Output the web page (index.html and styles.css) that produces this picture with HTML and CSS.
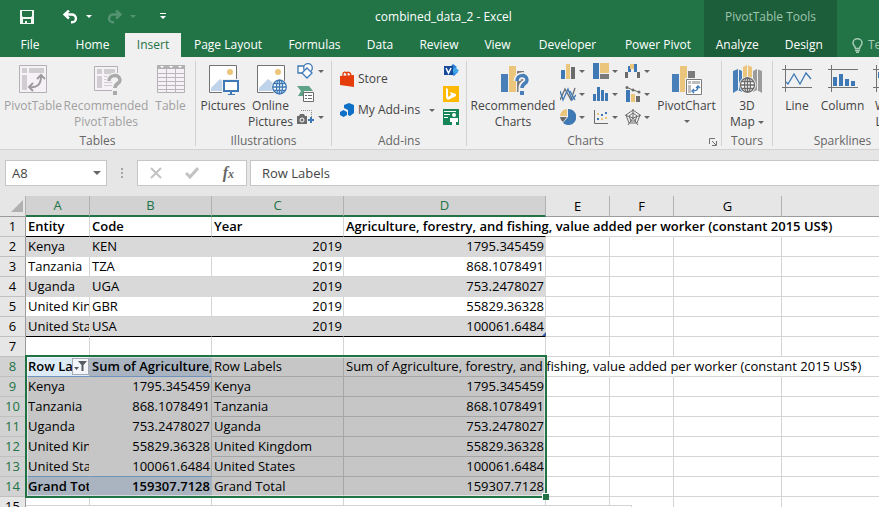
FILE: index.html
```html
<!DOCTYPE html>
<html lang="en">
<head>
<meta charset="utf-8">
<title>combined_data_2 - Excel</title>
<link rel="stylesheet" href="styles.css">
</head>
<body>
<div class="app">
<header class="top">
  <div class="titlebar">
    <div class="quick">
      <button type="button" aria-label="Save"><svg width="14" height="14" viewBox="0 0 14 14"><path fill="#f3f7f4" fill-rule="evenodd" d="M0 0h14v14H0zM2 1v5l1 1h8l1-1V1zM3 9v4h2v-2h2v2h4V9z"/></svg></button>
      <button type="button" aria-label="Undo" class="undo"><svg width="15" height="14" viewBox="0 0 15 14"><path fill="none" stroke="#fff" stroke-width="2.400" d="M6 .500 1.500 4.500 6 8.500M2 4.500h7a3.800 3.800 0 0 1 0 7.800H8"/></svg></button>
      <button type="button" aria-label="Undo list" class="arrow light"></button>
      <button type="button" aria-label="Redo" class="redo"><svg width="15" height="14" viewBox="0 0 15 14"><path fill="none" stroke="#559472" stroke-width="2.400" d="m9 .500 4.500 4-4.500 4M13 4.500H6a3.800 3.800 0 0 0 0 7.800h1"/></svg></button>
      <button type="button" aria-label="Redo list" class="arrow faint"></button>
      <button type="button" aria-label="Customize toolbar" class="more"><svg width="6" height="7" viewBox="0 0 6 7"><path fill="#fff" d="M0 0h6v1H0zM0 3h6L3 6z"/></svg></button>
    </div>
    <div class="doc">combined_data_2 - Excel</div>
  </div>
  <div class="context-title">PivotTable Tools</div>
  <nav class="tabs">
    <a href="#" class="file">File</a><a href="#">Home</a><a href="#" class="active">Insert</a><a href="#">Page Layout</a><a href="#">Formulas</a><a href="#">Data</a><a href="#">Review</a><a href="#">View</a><a href="#">Developer</a><a href="#">Power Pivot</a>
  </nav>
  <nav class="context-tabs"><a href="#">Analyze</a><a href="#">Design</a></nav>
  <div class="tell"><svg width="11" height="15" viewBox="0 0 11 15"><path fill="none" stroke="#a5cbb4" stroke-width="1.500" d="M3.500 10.500c0-2-2.500-3-2.500-5.500a4.500 4.200 0 0 1 9 0c0 2.500-2.500 3.500-2.500 5.500zM3 12.500h5M4 14.300h3"/></svg><span>Tell me</span></div>
</header>

<section class="ribbon">
  <div class="group g-tables">
    <div class="items">
      <button type="button" class="big off"><svg width="32" height="32" viewBox="0 0 32 32"><path fill="#f6f1f6" stroke="#b3b1b3" d="M2.500 2.500h27v27h-27z"/><path fill="#cfcdd0" d="M5 5h5v5H5zM12 5h15v5H12zM5 12h5v15H5z"/><path fill="none" stroke="#9d9b9e" stroke-width="2" d="M12 24c9 1 12-3 12-11M20 16l4-4 4 4M16 20l-4 4 4 4"/></svg><span>PivotTable</span></button>
      <button type="button" class="big off"><svg width="32" height="32" viewBox="0 0 32 32"><path fill="#f6f1f6" stroke="#b3b1b3" d="M4.500 3.500h23v24h-23z"/><path fill="#cfcdd0" d="M7 6h5v5H7zM14 6h11v5H14zM7 13h5v12H7zM14 13h9v1h-9zM14 16h8v1h-8zM14 19h8v1h-8zM14 22h8v1h-8z"/><path fill="none" stroke="#f0f0f0" stroke-width="6" d="M19 18c0-7 11-7 11-1 0 4-5 3-5 8v5"/><path fill="none" stroke="#aaa" stroke-width="3.500" d="M19 18c0-7 11-7 11-1 0 4-5 3-5 8"/><path fill="#aaa" d="M23 28h4v4h-4z"/></svg><span>Recommended<br>PivotTables</span></button>
      <button type="button" class="big off"><svg width="32" height="32" viewBox="0 0 32 32"><path fill="#f6f1f6" stroke="#b3b1b3" d="M2.500 2.500h27v27h-27z"/><path fill="#b3b1b3" d="M2 2h28v4H2z"/><path stroke="#b9b7b9" d="M2 10.500h28M2 14.500h28M2 18.500h28M2 22.500h28M2 26.500h28M11.500 6v24M20.500 6v24"/><path fill="#fff" d="M5 3h4L7 5zM14 3h4l-2 2zM23 3h4l-2 2z"/></svg><span>Table</span></button>
    </div>
    <div class="caption">Tables</div>
  </div>

  <div class="group g-illus">
    <div class="items">
      <button type="button" class="big"><svg width="32" height="32" viewBox="0 0 32 32"><path fill="#fff" stroke="#737373" d="M2.500 2.500h27v27h-27z"/><circle cx="23" cy="9" r="3" fill="#ecc57a"/><path fill="#bfd3ea" d="M4 28v-3l9-9 5 4v8z"/><path fill="#fff" stroke="#f0f0f0" stroke-width="4" d="M17 18h14v10H17z"/><path fill="#fff" stroke="#3e78b5" stroke-width="2" d="M17 18h14v10H17z"/><path fill="#3e78b5" d="M23 29h2v2h3v1h-7v-1h2z"/></svg><span>Pictures</span></button>
      <button type="button" class="big"><svg width="32" height="32" viewBox="0 0 32 32"><path fill="#fff" stroke="#737373" d="M2.500 2.500h27v27h-27z"/><circle cx="23" cy="9" r="3" fill="#ecc57a"/><path fill="#bfd3ea" d="M4 28v-3l9-9 5 4v8z"/><circle cx="24.500" cy="24" r="8" fill="#f0f0f0"/><g fill="#fff" stroke="#3e78b5" stroke-width="1.300"><circle cx="24.500" cy="24" r="6.800"/><ellipse cx="24.500" cy="24" rx="3" ry="6.800"/><path d="M24.500 17v14M18 24h13M19 20.500h11M19 27.500h11"/></g></svg><span>Online<br>Pictures</span></button>
      <div class="stack">
        <button type="button" aria-label="Shapes"><svg width="18" height="16" viewBox="0 0 18 16"><g fill="#fff" stroke="#3e78b5" stroke-width="1.300"><path d="M1 3h8v7H1z"/><circle cx="11" cy="5" r="4.300"/><path d="m10 5 5 5-5 5-5-5z"/></g></svg><i class="arrow"></i></button>
        <button type="button" aria-label="SmartArt"><svg width="18" height="16" viewBox="0 0 18 16"><path fill="#5ea287" d="M0 0h12l4 5H7v5H1l3-5z"/><path fill="#fff" stroke="#6b6b6b" d="M6.500 6.500h10v9h-10z"/><path stroke="#6b6b6b" d="M8 9.500h2M11 9.500h4M8 12.500h2M11 12.500h4"/></svg></button>
        <button type="button" aria-label="Screenshot"><svg width="18" height="16" viewBox="0 0 18 16"><path fill="none" stroke="#8a8a8a" stroke-dasharray="1 1" d="M4 1.500h10.500V8"/><path fill="#6b6b6b" d="M0 7h2l1-2h4l1 2h2v8H0z"/><circle cx="5" cy="11" r="2" fill="#6b6b6b" stroke="#fff"/><path stroke="#3e78b5" stroke-width="2" d="M11 11h6M14 8v6"/></svg><i class="arrow"></i></button>
      </div>
    </div>
    <div class="caption">Illustrations</div>
  </div>

  <div class="group g-addins">
    <div class="items">
      <div class="list">
        <button type="button"><svg width="14" height="16" viewBox="0 0 14 16"><path fill="#e43d09" d="m0 5 14-1v12L0 14z"/><path fill="none" stroke="#e43d09" stroke-width="1.300" d="M3 6V3c0-2 3-3 4 0v2M6 3c1-3 5-2 5 2"/></svg><span>Store</span></button>
        <button type="button"><svg width="14" height="16" viewBox="0 0 14 16"><path fill="#0f70c8" d="m9 1 5 2v8l-4 3-2-1V8L4 6V3z"/><path fill="#0f70c8" d="m3.500 8 3.500 2v3l-3.500 2L0 13v-3z"/></svg><span>My Add-ins</span><i class="arrow"></i></button>
      </div>
      <div class="stack">
        <button type="button" aria-label="Visio"><svg width="16" height="16" viewBox="0 0 16 16"><path fill="#2b7cd3" d="m10 1 4 3-4 3-3-3zM11 7l4 2-4 4-3-2z"/><path fill="#41a5ee" d="m12 4 4 3.500-4 3.500-3-3z"/><path fill="#184a9c" d="M1 3h9v9H1z"/><path fill="none" stroke="#fff" stroke-width="1.500" d="m3 5 2.500 5L8 5"/></svg></button>
        <button type="button" aria-label="Bing"><svg width="16" height="16" viewBox="0 0 16 16"><path fill="#ffb900" d="M0 0h16v16H0z"/><path fill="#fff" d="m3 2 2 1v8l3-2-1-3 6 2v2l-8 4-2-2z"/></svg></button>
        <button type="button" aria-label="People Graph"><svg width="16" height="16" viewBox="0 0 16 16"><path fill="#158457" d="M0 0h16v16H0z"/><path stroke="#fff" d="M1 2.500h12M1 5.500h6M1 8.500h4"/><circle cx="11" cy="6" r="2" fill="#fff"/><path fill="#fff" d="M7 9h8v4h-2v3H9v-3H7z"/></svg></button>
      </div>
    </div>
    <div class="caption">Add-ins</div>
  </div>

  <div class="group g-charts">
    <div class="items">
      <button type="button" class="big"><svg width="32" height="32" viewBox="0 0 32 32"><path fill="#487fb8" d="M4 11h7v18H4z"/><path fill="#ebc57c" d="M12 3h7v26h-7z"/><path fill="#7b7b7b" d="M20 8h7v21h-7z"/><path fill="none" stroke="#f0f0f0" stroke-width="7" d="M20 18c0-7 10-7 10-1 0 4-5 3-5 8v6"/><path fill="none" stroke="#487fb8" stroke-width="3.500" d="M20 18c0-7 10-7 10-1 0 4-5 3-5 8"/><path fill="#487fb8" d="M23 28h4v4h-4z"/></svg><span>Recommended<br>Charts</span></button>
      <div class="gallery">
        <button type="button" aria-label="Column chart"><svg width="16" height="16" viewBox="0 0 16 16"><path fill="#3e78b5" d="M1 7h4v9H1z"/><path fill="#ebc57c" d="M6 1h4v15H6z"/><path fill="#6b6b6b" d="M11 4h4v12h-4z"/></svg><i class="arrow"></i></button>
        <button type="button" aria-label="Hierarchy chart"><svg width="16" height="16" viewBox="0 0 16 16"><path fill="#3e78b5" d="M0 0h6v16H0z"/><path fill="#ebc57c" d="M7 0h9v10H7z"/><path fill="#7b7b7b" d="M7 11h9v5H7z"/></svg><i class="arrow"></i></button>
        <button type="button" aria-label="Waterfall chart"><svg width="16" height="16" viewBox="0 0 16 16"><path fill="#6b6b6b" d="M0 9h3v6H0zM12 9h3v6h-3z"/><path fill="#3e78b5" d="M3 3h3v6H3zM9 1h3v8H9z"/><path fill="#ebc57c" d="M5 1h4v5H5z"/></svg><i class="arrow"></i></button>
        <button type="button" aria-label="Line chart"><svg width="16" height="16" viewBox="0 0 16 16"><path fill="none" stroke="#6b6b6b" stroke-width="1.300" d="m0 14 5-11 6 11 4-12"/><path fill="none" stroke="#3e78b5" stroke-width="1.300" d="m0 5 3 9 5-11 4 11 4-5M10 5l5 9"/></svg><i class="arrow"></i></button>
        <button type="button" aria-label="Statistic chart"><svg width="16" height="16" viewBox="0 0 16 16"><path fill="#3e78b5" d="M0 8h3v7H0zM4 1h3v14H4zM8 4h3v11H8zM12 7h3v8h-3z"/></svg><i class="arrow"></i></button>
        <button type="button" aria-label="Combo chart"><svg width="16" height="16" viewBox="0 0 16 16"><path fill="#3e78b5" d="M1 4h4v12H1z"/><path fill="#ebc57c" d="M6 8h4v8H6z"/><path fill="#6b6b6b" d="M11 10h4v6h-4z"/><path fill="none" stroke="#6b6b6b" d="m1 1 7 3 6 2"/><circle cx="2" cy="1.500" r="1.500" fill="#6b6b6b"/><circle cx="8" cy="4" r="1.500" fill="#6b6b6b"/><circle cx="14" cy="6" r="1.500" fill="#6b6b6b"/></svg><i class="arrow"></i></button>
        <button type="button" aria-label="Pie chart"><svg width="16" height="16" viewBox="0 0 16 16"><path fill="#3e78b5" d="M8 0a8 8 0 1 1-5 14l5-6z"/><path fill="#ebc57c" d="M7 0v7H0a7 7 0 0 1 7-7z"/><path fill="#6b6b6b" d="M0 8h7l-4 5a7 7 0 0 1-3-5z"/></svg><i class="arrow"></i></button>
        <button type="button" aria-label="Scatter chart"><svg width="16" height="16" viewBox="0 0 16 16"><path fill="none" stroke="#6b6b6b" d="M1.500 1v13.500H15"/><path fill="#ebc57c" d="M4 4h2v2H4zM8 9h2v2H8zM12 8h2v2h-2z"/><path fill="#3e78b5" d="M8 5h2v2H8zM12 3h2v2h-2zM4 9h2v2H4z"/></svg><i class="arrow"></i></button>
        <button type="button" aria-label="Radar chart"><svg width="16" height="16" viewBox="0 0 16 16"><path fill="none" stroke="#6b6b6b" d="m8 1 7 5-3 8H4L1 6zM8 4l4 3-2 5H6L4 7zM8 0v9M0 6l8 3 8-3M3 16l5-7 5 7"/></svg><i class="arrow"></i></button>
      </div>
      <button type="button" class="big"><svg width="32" height="32" viewBox="0 0 32 32"><path fill="#487fb8" d="M1 11h7v18H1z"/><path fill="#ebc57c" d="M9 3h7v26H9z"/><path fill="#7b7b7b" d="M17 8h7v8h-7z"/><path fill="#fff" stroke="#f0f0f0" stroke-width="3" d="M15.500 16.500h15v15h-15z"/><path fill="#fff" stroke="#7b7b7b" d="M15.500 16.500h15v15h-15z"/><path fill="#bdbdbd" d="M17 18h3v3h-3zM21 18h8v3h-8zM17 22h3v8h-3z"/><path fill="none" stroke="#3e78b5" stroke-width="1.300" d="M21 28c5 0 6-1 6-5M25 25l2-2 2 2M23 26l-2 2 2 2"/></svg><span>PivotChart</span><i class="arrow"></i></button>
    </div>
    <div class="caption">Charts<button type="button" class="launcher" aria-label="Chart options"><svg width="8" height="8" viewBox="0 0 8 8"><path fill="none" stroke="#737373" d="M.500 6V.500H6M3 3l4 4M7.500 3v4.500H3"/></svg></button></div>
  </div>

  <div class="group g-tours">
    <div class="items">
      <button type="button" class="big"><svg width="32" height="32" viewBox="0 0 32 32"><path fill="#487fb8" d="m2 8 5-2 4 2v21l-4-2-5 3z"/><path fill="#ebc57c" d="m12 4 4-2 5 2v17h-9z"/><path fill="#9c9c9c" d="m22 8 4-2 5 2v22l-5-3-4 2z"/><path stroke="#f0f0f0" d="M7.500 6v21M16.500 2v18M26.500 6v21"/><circle cx="16.500" cy="22" r="8.500" fill="#f0f0f0"/><g fill="#fff" stroke="#6b6b6b" stroke-width="1.300"><circle cx="16.500" cy="22" r="7"/><ellipse cx="16.500" cy="22" rx="3" ry="7"/><path d="M16.500 15v14M9.500 22h14M11 18.500h11M11 25.500h11"/></g></svg><span>3D<br>Map <i class="arrow"></i></span></button>
    </div>
    <div class="caption">Tours</div>
  </div>

  <div class="group g-spark">
    <div class="items">
      <button type="button" class="big"><svg width="32" height="32" viewBox="0 0 32 32"><path stroke="#737373" d="M1 6.500h30M1 24.500h30M4.500 2v27"/><path fill="none" stroke="#3e78b5" stroke-width="1.300" d="m5 19 2 2 6-10 6 10 6-11 5 6"/></svg><span>Line</span></button>
      <button type="button" class="big"><svg width="32" height="32" viewBox="0 0 32 32"><path stroke="#737373" d="M1 6.500h30M1 24.500h30M4.500 2v27"/><path fill="#3e78b5" d="M6 14h4v9H6zM12 11h4v12h-4zM18 16h4v7h-4zM24 18h4v5h-4z"/></svg><span>Column</span></button>
      <button type="button" class="big"><svg width="32" height="32" viewBox="0 0 32 32"><path stroke="#737373" d="M1 6.500h30M1 24.500h30M4.500 2v27"/><path fill="#3e78b5" d="M6 9h4v6H6zM18 9h4v6h-4z"/></svg><span>Win/<br>Loss</span></button>
    </div>
    <div class="caption">Sparklines</div>
  </div>
</section>

<section class="formula">
  <div class="namebox"><input type="text" value="A8" aria-label="Name box"><i class="arrow"></i></div>
  <svg class="grip" width="3" height="12" viewBox="0 0 3 12"><path fill="#a5a5a5" d="M0 1h2v2H0zM0 5h2v2H0zM0 9h2v2H0z"/></svg>
  <div class="fx">
    <button type="button" aria-label="Cancel"><svg width="12" height="12" viewBox="0 0 12 12"><path stroke="#c3c3c3" stroke-width="2" d="m1 1 10 10M11 1 1 11"/></svg></button>
    <button type="button" aria-label="Enter"><svg width="14" height="12" viewBox="0 0 14 12"><path fill="none" stroke="#c3c3c3" stroke-width="3" d="m1 6 4 4 8-9"/></svg></button>
    <button type="button" class="fn">f<sub>x</sub></button>
  </div>
  <input class="content" type="text" value="Row Labels" aria-label="Formula bar">
</section>

<main class="sheet">
<table>
<colgroup><col class="w-head"><col class="w-a"><col class="w-b"><col class="w-c"><col class="w-d"><col class="w-e"><col class="w-e"><col class="w-g"><col></colgroup>
<thead><tr><th class="corner"><svg width="12" height="12" viewBox="0 0 12 12"><path fill="#b1b1b1" d="M12 0v12H0z"/></svg></th><th class="on">A</th><th class="on">B</th><th class="on">C</th><th class="on">D</th><th>E</th><th>F</th><th>G</th><th></th></tr></thead>
<tbody>
<tr class="title"><th>1</th><td>Entity</td><td>Code</td><td>Year</td><td class="spill">Agriculture, forestry, and fishing, value added per worker (constant 2015 US$)</td><td class="open"></td><td class="open"></td><td class="open"></td><td></td></tr>
<tr class="band"><th>2</th><td>Kenya</td><td>KEN</td><td class="n">2019</td><td class="n">1795.345459</td><td></td><td></td><td></td><td></td></tr>
<tr><th>3</th><td>Tanzania</td><td>TZA</td><td class="n">2019</td><td class="n">868.1078491</td><td></td><td></td><td></td><td></td></tr>
<tr class="band"><th>4</th><td>Uganda</td><td>UGA</td><td class="n">2019</td><td class="n">753.2478027</td><td></td><td></td><td></td><td></td></tr>
<tr><th>5</th><td>United Kingdom</td><td>GBR</td><td class="n">2019</td><td class="n">55829.36328</td><td></td><td></td><td></td><td></td></tr>
<tr class="band last"><th>6</th><td>United States</td><td>USA</td><td class="n">2019</td><td class="n">100061.6484</td><td></td><td></td><td></td><td></td></tr>
<tr><th>7</th><td></td><td></td><td></td><td></td><td></td><td></td><td></td><td></td></tr>
<tr class="sel head"><th>8</th><td class="first"><div class="filter">Row Labels<button type="button" aria-label="Filter row labels"><svg width="13" height="11" viewBox="0 0 13 11"><path fill="#555c66" d="M4 0h9L9.500 4v6h-2V4zM0 6h5L2.500 9z"/></svg></button></div></td><td>Sum of Agriculture, forestry</td><td>Row Labels</td><td class="spill">Sum of Agriculture, forestry, and fishing, value added per worker (constant 2015 US$)</td><td class="open"></td><td class="open"></td><td class="open"></td><td></td></tr>
<tr class="sel"><th>9</th><td>Kenya</td><td class="n">1795.345459</td><td>Kenya</td><td class="n">1795.345459</td><td></td><td></td><td></td><td></td></tr>
<tr class="sel"><th>10</th><td>Tanzania</td><td class="n">868.1078491</td><td>Tanzania</td><td class="n">868.1078491</td><td></td><td></td><td></td><td></td></tr>
<tr class="sel"><th>11</th><td>Uganda</td><td class="n">753.2478027</td><td>Uganda</td><td class="n">753.2478027</td><td></td><td></td><td></td><td></td></tr>
<tr class="sel"><th>12</th><td>United Kingdom</td><td class="n">55829.36328</td><td>United Kingdom</td><td class="n">55829.36328</td><td></td><td></td><td></td><td></td></tr>
<tr class="sel pre"><th>13</th><td>United States</td><td class="n">100061.6484</td><td>United States</td><td class="n">100061.6484</td><td></td><td></td><td></td><td></td></tr>
<tr class="sel total"><th>14</th><td>Grand Total</td><td class="n">159307.7128</td><td>Grand Total</td><td class="n">159307.7128</td><td></td><td></td><td></td><td></td></tr>
<tr><th>15</th><td></td><td></td><td></td><td></td><td></td><td></td><td></td><td></td></tr>
</tbody>
</table>
<div class="selection"></div>
<div class="tablecorner"></div>
<div class="object"></div>
</main>
</div>
</body>
</html>
```
FILE: styles.css
```css
* { box-sizing: border-box; }
body { margin: 0; font: 12px/16px "Open Sans", "Noto Sans", sans-serif; color: #444; background: #e6e6e6; }
button { border: 0; padding: 0; margin: 0; background: none; font: inherit; color: inherit; }
input { font: inherit; color: inherit; }
a { color: #fff; text-decoration: none; }
svg { display: block; flex: none; }
.app { height: 100vh; overflow: hidden; display: flex; flex-direction: column; }

.arrow { display: block; flex: none; width: 0; height: 0; border: 3px solid transparent; border-top-color: #666; border-bottom: 0; }
.arrow.light { border-top-color: #fff; }
.arrow.faint { border-top-color: #559472; }

/* Title bar and tabs */
.top { flex: none; display: grid; grid-template-columns: 704px 133px 1fr; grid-template-rows: 33px 24px; background: #227447; color: #fff; }
.titlebar { grid-area: 1 / 1 / 2 / 4; display: grid; grid-template-columns: 1fr auto 1fr; align-items: center; padding-left: 8px; }
.quick { display: flex; align-items: center; padding-left: 12px; }
.undo { margin-left: 29px; }
.quick .arrow { margin-left: 8px; }
.redo { margin-left: 15px; }
.more { margin-left: 24px; }
.context-title { grid-area: 1 / 2; background: #1d5e3a; color: #9ec5ae; display: flex; align-items: center; justify-content: center; }
.tabs { grid-area: 2 / 1; display: grid; grid-template-columns: 60px 65px 56px 94px 79px 52px 66px 51px 89px 1fr; }
.tabs a, .context-tabs a { display: flex; align-items: center; justify-content: center; white-space: nowrap; }
.tabs .active { background: #f0f0f0; color: #217346; }
.context-tabs { grid-area: 2 / 2; background: #1d5e3a; display: grid; grid-template-columns: 1fr 1fr; }
.tell { grid-area: 2 / 3; display: flex; align-items: center; gap: 5px; padding-left: 15px; overflow: hidden; white-space: nowrap; color: #a5cbb4; }

/* Ribbon */
.ribbon { flex: none; display: flex; height: 93px; background: #f0f0f0; border-bottom: 1px solid #d2d2d2; padding: 4px 0 3px; overflow: hidden; }
.group { flex: none; display: flex; flex-direction: column; justify-content: space-between; border-right: 1px solid #d2d2d2; }
.items { display: grid; padding-top: 2px; }
.g-tables .items { grid-template-columns: 66px 80px 49px; }
.g-illus .items { grid-template-columns: 54px 41px 40px; }
.g-addins .items { grid-template-columns: 111px 23px; }
.g-charts .items { grid-template-columns: 92px 99px 57px 6px; }
.g-tours .items { grid-template-columns: 50px; }
.g-spark .items { grid-template-columns: 48px 43px 48px; }
.caption { position: relative; text-align: center; line-height: 10px; color: #666; }
.g-charts .caption { padding-right: 17px; }
.launcher { position: absolute; right: 4px; bottom: 0; }
.big { display: flex; flex-direction: column; align-items: center; white-space: nowrap; gap: 3px; }
.big span { text-align: center; }
.big > .arrow { margin-top: 3px; }
.big span .arrow { display: inline-block; vertical-align: middle; }
.off { color: #a0a0a0; }
.stack { display: flex; flex-direction: column; gap: 7px; padding-left: 6px; }
.g-addins .stack { padding-left: 0; }
.stack button, .gallery button { display: flex; align-items: center; gap: 3px; }
.list { display: flex; flex-direction: column; align-items: start; gap: 15px; padding: 8px 0 0 8px; }
.list button { display: flex; align-items: center; gap: 4px; white-space: nowrap; }
.list .arrow { margin-left: 5px; }
.gallery { display: grid; grid-template-columns: 1fr 1fr 1fr; gap: 7px 0; align-content: start; padding-left: 1px; }

/* Formula bar */
.formula { flex: none; display: flex; align-items: center; height: 46px; padding: 0 0 0 5px; font-size: 13px; }
.namebox, .fx, .content { height: 26px; background: #fff; border: 1px solid #c6c6c6; }
.namebox { width: 102px; display: flex; align-items: center; padding-right: 5px; }
.namebox input { flex: 1; min-width: 0; border: 0; padding: 0 6px; background: none; }
.namebox .arrow { border-width: 4px 4px 0; }
.grip { margin: 0 13px 0 14px; }
.fx { width: 110px; display: flex; align-items: center; justify-content: space-between; padding: 0 12px; }
.fn { font: italic bold 16px/20px "Liberation Serif", serif; color: #666; }
.fn sub { font-size: 12px; line-height: 0; vertical-align: baseline; }
.content { flex: 1; min-width: 0; margin-left: 3px; border-right: 0; padding: 0 11px; }

/* Worksheet */
.sheet { position: relative; flex: 1; min-height: 0; overflow: hidden; background: #fff; color: #000; font-size: 13px; line-height: 19px; }
table { width: 100%; table-layout: fixed; border-collapse: separate; border-spacing: 0; }
.w-head { width: 26px; }
.w-a, .w-e { width: 64px; }
.w-b { width: 122px; }
.w-c { width: 132px; }
.w-d { width: 202px; }
.w-g { width: 108px; }
tr { height: 20px; }
th, td { height: 20px; padding: 0 2px; white-space: nowrap; overflow: hidden; border: 0 solid #d4d4d4; border-width: 0 1px 1px 0; text-align: left; }
th { background: #e6e6e6; font-weight: 400; text-align: center; padding: 0; border-color: #c0c0c0; }
thead th { height: 21px; border-right-color: #b1b1b1; border-bottom-color: #9b9b9b; }
thead .corner { padding-left: 11px; }
thead th.on { background: #d2d2d2; color: #217346; border-bottom: 2px solid #217346; }
tbody th { border-right-color: #9b9b9b; }
td:last-child, thead th:last-child { border-right: 0; }
.n { text-align: right; padding-right: 1px; }
.spill { overflow: visible; border-right-color: transparent; }
.open { border-right-color: transparent; }
.title td:nth-child(-n+5) { font-weight: 600; border-bottom-color: #000; }
.band td:nth-child(-n+5) { background: #d9d9d9; border-color: #d9d9d9; }
.last td:nth-child(-n+5) { border-bottom-color: #000; }
.sel th { background: #d2d2d2; color: #217346; border-right-color: #217346; }
.sel td:nth-child(-n+5) { background: #c6c6c6; border-color: #a6a6a6; }
.sel td:nth-child(2) { border-color: #c6c6c6; }
.sel td:nth-child(3) { border-bottom-color: #c6c6c6; }
.sel td:nth-child(2):nth-child(-n+5) { border-color: #c6c6c6; }
.sel td:nth-child(3):nth-child(-n+5) { border-bottom-color: #c6c6c6; }
.sel.head td:nth-child(-n+3), .sel.total td:nth-child(-n+3) { font-weight: 600; background: #a9b4c0; border-color: #a9b4c0; }
.sel.head td.first:nth-child(2) { background: #ddebf7; }
.sel.head td:nth-child(-n+3):nth-child(n), .sel.pre td:nth-child(-n+3):nth-child(n) { border-bottom-color: #6f93bd; }
.first { padding-right: 0; }
.filter { display: flex; justify-content: space-between; position: relative; overflow: hidden; }
.filter button { position: absolute; right: 0; top: 1px; width: 17px; height: 17px; border: 1px solid #a6abb3; background: #f4f6fa; display: grid; place-items: center; }
.selection { position: absolute; left: 25px; top: 159px; width: 522px; height: 143px; border: 2px solid #217346; box-shadow: inset 0 0 0 1px #fff8; }
.selection::after { content: ""; position: absolute; right: -4px; bottom: -4px; width: 6px; height: 6px; background: #217346; border: 1px solid #fff; border-width: 1px 0 0 1px; }
.tablecorner { position: absolute; left: 542px; top: 136px; border: 2px solid #3c5fa8; border-top-color: transparent; border-left-color: transparent; }
.object { position: absolute; left: 26px; top: 309px; width: 606px; height: 20px; background: #fff; border: 1px solid #d4d4d4; border-left: 0; }
```
